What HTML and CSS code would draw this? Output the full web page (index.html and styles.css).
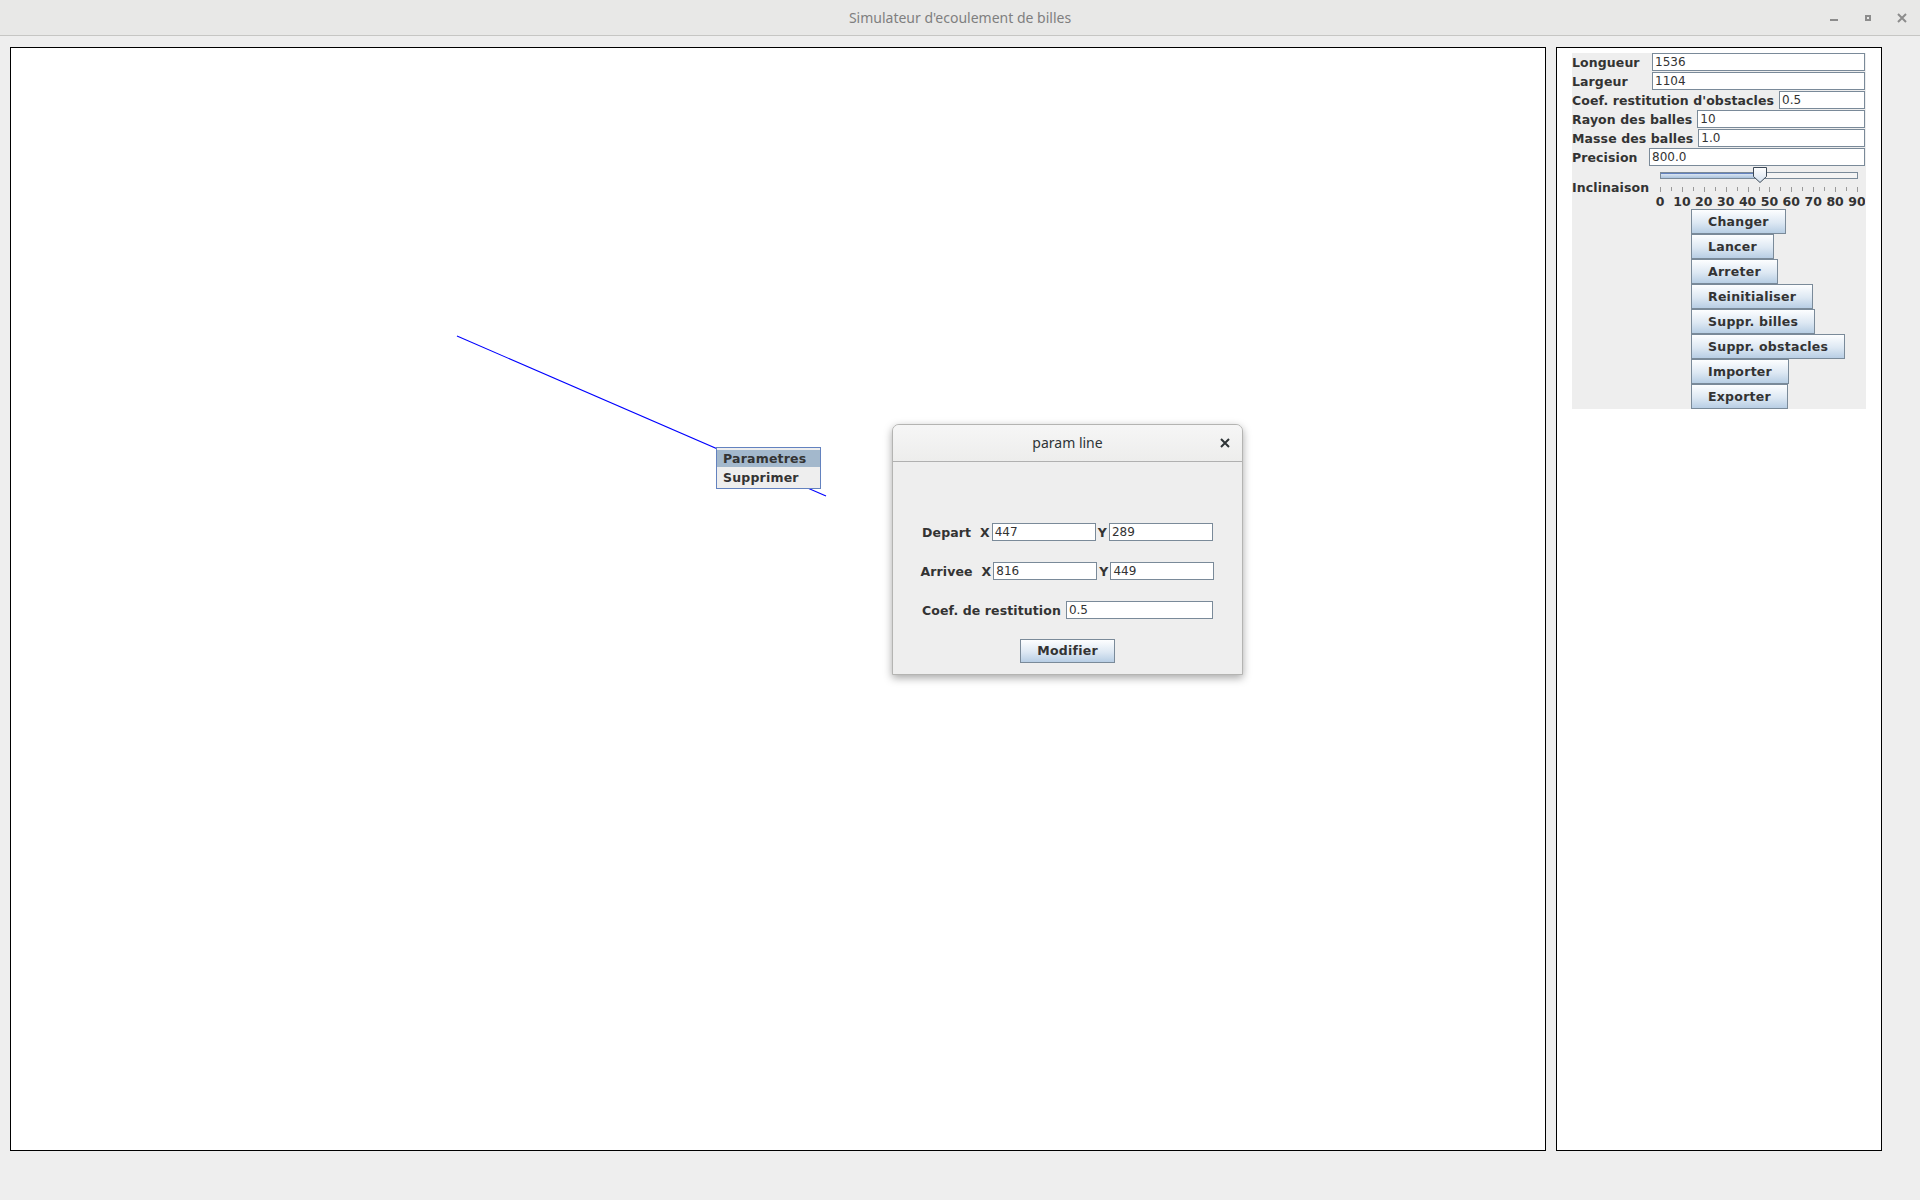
FILE: index.html
```html
<!DOCTYPE html>
<html lang="fr">
<head>
<meta charset="utf-8">
<title>Simulateur d'ecoulement de billes</title>
<link rel="stylesheet" href="styles.css">
</head>
<body>
<div class="titlebar">
  <div></div>
  <div class="title">Simulateur d'ecoulement de billes</div>
  <div class="controls">
    <svg width="84" height="35" viewBox="0 0 84 35">
      <rect x="4" y="19" width="8" height="2" fill="#8c8c8c"/>
      <rect x="40" y="16" width="4" height="4" fill="none" stroke="#8c8c8c" stroke-width="2"/>
      <path d="M72 14 L80 22 M80 14 L72 22" stroke="#8c8c8c" stroke-width="2" fill="none"/>
    </svg>
  </div>
</div>

<div class="main">
  <div class="canvas">
    <svg class="drawing" width="1536" height="1104" viewBox="0 0 1536 1104">
      <line x1="447" y1="289" x2="816" y2="449" stroke="#0000ff" stroke-width="1.1"/>
    </svg>
  </div>
  <div class="panel">
    <div class="form">
      <div class="row"><span class="lbl w75">Longueur</span><span class="tf">1536</span></div>
      <div class="row"><span class="lbl w75">Largeur</span><span class="tf">1104</span></div>
      <div class="row"><span class="lbl">Coef. restitution d'obstacles</span><span class="tf">0.5</span></div>
      <div class="row"><span class="lbl">Rayon des balles</span><span class="tf">10</span></div>
      <div class="row"><span class="lbl">Masse des balles</span><span class="tf">1.0</span></div>
      <div class="row"><span class="lbl w72">Precision</span><span class="tf">800.0</span></div>
      <div class="row slider-row">
        <span class="lbl w75">Inclinaison</span>
        <svg class="slider" width="213" height="42" viewBox="0 0 213 42">
          <defs>
            <linearGradient id="fillg" x1="0" y1="0" x2="0" y2="1">
              <stop offset="0" stop-color="#e6eef7"/>
              <stop offset="1" stop-color="#a9c2dd"/>
            </linearGradient>
            <linearGradient id="thumbg" x1="0" y1="0" x2="0" y2="1">
              <stop offset="0" stop-color="#ffffff"/>
              <stop offset="1" stop-color="#d3e0ee"/>
            </linearGradient>
          </defs>
          <rect x="8.5" y="5.5" width="197" height="6" fill="#f4f4f4" stroke="#7a8a99"/>
          <rect x="9" y="6" width="93" height="5" fill="url(#fillg)"/>
          <line x1="9" y1="6.5" x2="102" y2="6.5" stroke="#6382bf"/>
          <polygon points="101.5,0.5 114.5,0.5 114.5,9.5 108,15.5 101.5,9.5" fill="url(#thumbg)" stroke="#3d4a58"/>
          <g stroke="#9a9a9a" stroke-width="1">
            <line x1="8.5" y1="20" x2="8.5" y2="25"/>
            <line x1="19.5" y1="20" x2="19.5" y2="24"/>
            <line x1="30.5" y1="20" x2="30.5" y2="25"/>
            <line x1="41.5" y1="20" x2="41.5" y2="24"/>
            <line x1="52.5" y1="20" x2="52.5" y2="25"/>
            <line x1="63.5" y1="20" x2="63.5" y2="24"/>
            <line x1="74.5" y1="20" x2="74.5" y2="25"/>
            <line x1="85.5" y1="20" x2="85.5" y2="24"/>
            <line x1="96.5" y1="20" x2="96.5" y2="25"/>
            <line x1="107.5" y1="20" x2="107.5" y2="24"/>
            <line x1="117.5" y1="20" x2="117.5" y2="25"/>
            <line x1="128.5" y1="20" x2="128.5" y2="24"/>
            <line x1="139.5" y1="20" x2="139.5" y2="25"/>
            <line x1="150.5" y1="20" x2="150.5" y2="24"/>
            <line x1="161.5" y1="20" x2="161.5" y2="25"/>
            <line x1="172.5" y1="20" x2="172.5" y2="24"/>
            <line x1="183.5" y1="20" x2="183.5" y2="25"/>
            <line x1="194.5" y1="20" x2="194.5" y2="24"/>
            <line x1="205.5" y1="20" x2="205.5" y2="25"/>
          </g>
          <g class="ticklbl" text-anchor="middle">
            <text x="8" y="39">0</text>
            <text x="29.9" y="39">10</text>
            <text x="51.8" y="39">20</text>
            <text x="73.7" y="39">30</text>
            <text x="95.6" y="39">40</text>
            <text x="117.4" y="39">50</text>
            <text x="139.3" y="39">60</text>
            <text x="161.2" y="39">70</text>
            <text x="183.1" y="39">80</text>
            <text x="205" y="39">90</text>
          </g>
        </svg>
      </div>
      <div class="buttons">
        <div class="btn">Changer</div>
        <div class="btn">Lancer</div>
        <div class="btn">Arreter</div>
        <div class="btn">Reinitialiser</div>
        <div class="btn">Suppr. billes</div>
        <div class="btn">Suppr. obstacles</div>
        <div class="btn">Importer</div>
        <div class="btn">Exporter</div>
      </div>
    </div>
  </div>
</div>

<div class="popup">
  <div class="mi active">Parametres</div>
  <div class="mi">Supprimer</div>
</div>

<div class="dialog">
  <div class="dlg-head">
    <div></div>
    <div class="dlg-title">param line</div>
    <div class="dlg-close">
      <svg width="10" height="10" viewBox="0 0 10 10"><path d="M1 1 L9 9 M9 1 L1 9" stroke="#2e3436" stroke-width="2"/></svg>
    </div>
  </div>
  <div class="dlg-body">
    <div class="dlg-row">
      <span class="dlg-lbl">Depart  X</span><span class="dtf">447</span><span class="dlg-lbl">Y</span><span class="dtf">289</span>
    </div>
    <div class="dlg-row">
      <span class="dlg-lbl">Arrivee  X</span><span class="dtf">816</span><span class="dlg-lbl">Y</span><span class="dtf">449</span>
    </div>
    <div class="dlg-row">
      <span class="dlg-lbl coef">Coef. de restitution</span><span class="dtf wide">0.5</span>
    </div>
    <div class="btn dlg-btn">Modifier</div>
  </div>
</div>
</body>
</html>
```

FILE: styles.css
```css
html, body {
  margin: 0;
  padding: 0;
}
body {
  width: 1920px;
  height: 1200px;
  overflow: hidden;
  position: relative;
  background: #eeeeee;
  font-family: "DejaVu Sans", sans-serif;
  color: #333333;
}

/* window title bar */
.titlebar {
  height: 35px;
  border-bottom: 1px solid #c6c6c4;
  background: #e8e8e7;
  display: grid;
  grid-template-columns: 1fr auto 1fr;
  align-items: center;
}
.title {
  font-family: "Noto Sans", sans-serif;
  font-size: 14px;
  color: #7f7f7f;
}
.controls {
  justify-self: end;
  display: flex;
  margin-right: 10px;
}
.controls svg { display: block; }

/* main area */
.main {
  display: flex;
  gap: 10px;
  padding: 11px 0 0 10px;
}
.canvas {
  width: 1536px;
  height: 1104px;
  box-sizing: border-box;
  border: 1px solid #000;
  background: #fff;
  position: relative;
}
.drawing {
  position: absolute;
  left: -1px;
  top: -1px;
  overflow: visible;
}
.panel {
  width: 326px;
  height: 1104px;
  box-sizing: border-box;
  border: 1px solid #000;
  background: #fff;
  padding: 5px 15px 0 15px;
}
.form {
  background: #eeeeee;
  width: 294px;
}
.row {
  display: flex;
  align-items: flex-start;
  height: 19px;
  padding-right: 1px;
}
.lbl {
  font-weight: bold;
  font-size: 12.5px;
  letter-spacing: 0.1px;
  line-height: 20px;
  color: #333;
  margin-right: 5px;
  white-space: nowrap;
}
.lbl.w75 { width: 75px; }
.lbl.w72 { width: 72px; }
.tf {
  flex: 1;
  height: 18px;
  box-sizing: border-box;
  border: 1px solid #7a8a99;
  background: #fff;
  font-size: 12px;
  line-height: 17px;
  color: #333;
  padding-left: 2px;
}
.slider-row {
  height: 42px;
  align-items: center;
}
.slider { display: block; }
.ticklbl {
  font-family: "DejaVu Sans", sans-serif;
  font-weight: bold;
  font-size: 12.5px;
  fill: #333;
}

/* buttons */
.buttons {
  display: flex;
  flex-direction: column;
  align-items: flex-start;
  padding-left: 119px;
}
.btn {
  height: 25px;
  box-sizing: border-box;
  border: 1px solid #7a8a99;
  background: linear-gradient(#fdfeff, #dde8f3 55%, #b8cee4);
  padding: 0 16px;
  font-weight: bold;
  font-size: 12.5px;
  letter-spacing: 0.25px;
  line-height: 23px;
  color: #333;
  white-space: nowrap;
}

/* popup menu */
.popup {
  position: absolute;
  left: 716px;
  top: 447px;
  width: 105px;
  box-sizing: border-box;
  border: 1px solid #6382bf;
  background: #eeeeee;
  padding: 2px 0 1px;
}
.mi {
  height: 19px;
  line-height: 20px;
  padding-left: 6px;
  font-weight: bold;
  font-size: 12.5px;
  letter-spacing: 0.2px;
  color: #333;
}
.mi.active {
  background: #a3b8cc;
  height: 17px;
  line-height: 18px;
  margin-bottom: 1px;
}

/* dialog */
.dialog {
  position: absolute;
  left: 892px;
  top: 424px;
  width: 351px;
  height: 251px;
  box-sizing: border-box;
  border: 1px solid #b4b4b2;
  border-radius: 7px 7px 0 0;
  background: #eeeeee;
  box-shadow: 0 3px 9px rgba(0, 0, 0, 0.35);
  overflow: hidden;
}
.dlg-head {
  height: 36px;
  border-bottom: 1px solid #b0b0b0;
  background: linear-gradient(#f6f6f6, #ededec);
  display: grid;
  grid-template-columns: 1fr auto 1fr;
  align-items: center;
}
.dlg-title {
  font-family: "Noto Sans", sans-serif;
  font-size: 14px;
  color: #2e3436;
  margin-top: -1px;
}
.dlg-close {
  justify-self: end;
  margin-right: 12px;
  display: flex;
}
.dlg-close svg { display: block; }
.dlg-body {
  padding-top: 61px;
  display: flex;
  flex-direction: column;
  align-items: center;
  gap: 21px;
}
.dlg-row {
  display: flex;
  align-items: center;
  height: 18px;
  gap: 2px;
}
.dlg-lbl {
  font-weight: bold;
  font-size: 12.5px;
  letter-spacing: 0.1px;
  color: #333;
  white-space: pre;
}
.dlg-lbl.coef { margin-right: 3px; }
.dtf {
  width: 104px;
  height: 18px;
  box-sizing: border-box;
  border: 1px solid #7a8a99;
  background: #fff;
  font-size: 12px;
  line-height: 17px;
  color: #333;
  padding-left: 2px;
}
.dtf.wide { width: 147px; }
.dlg-btn {
  margin-top: -1px;
  height: 24px;
  line-height: 22px;
}
```
